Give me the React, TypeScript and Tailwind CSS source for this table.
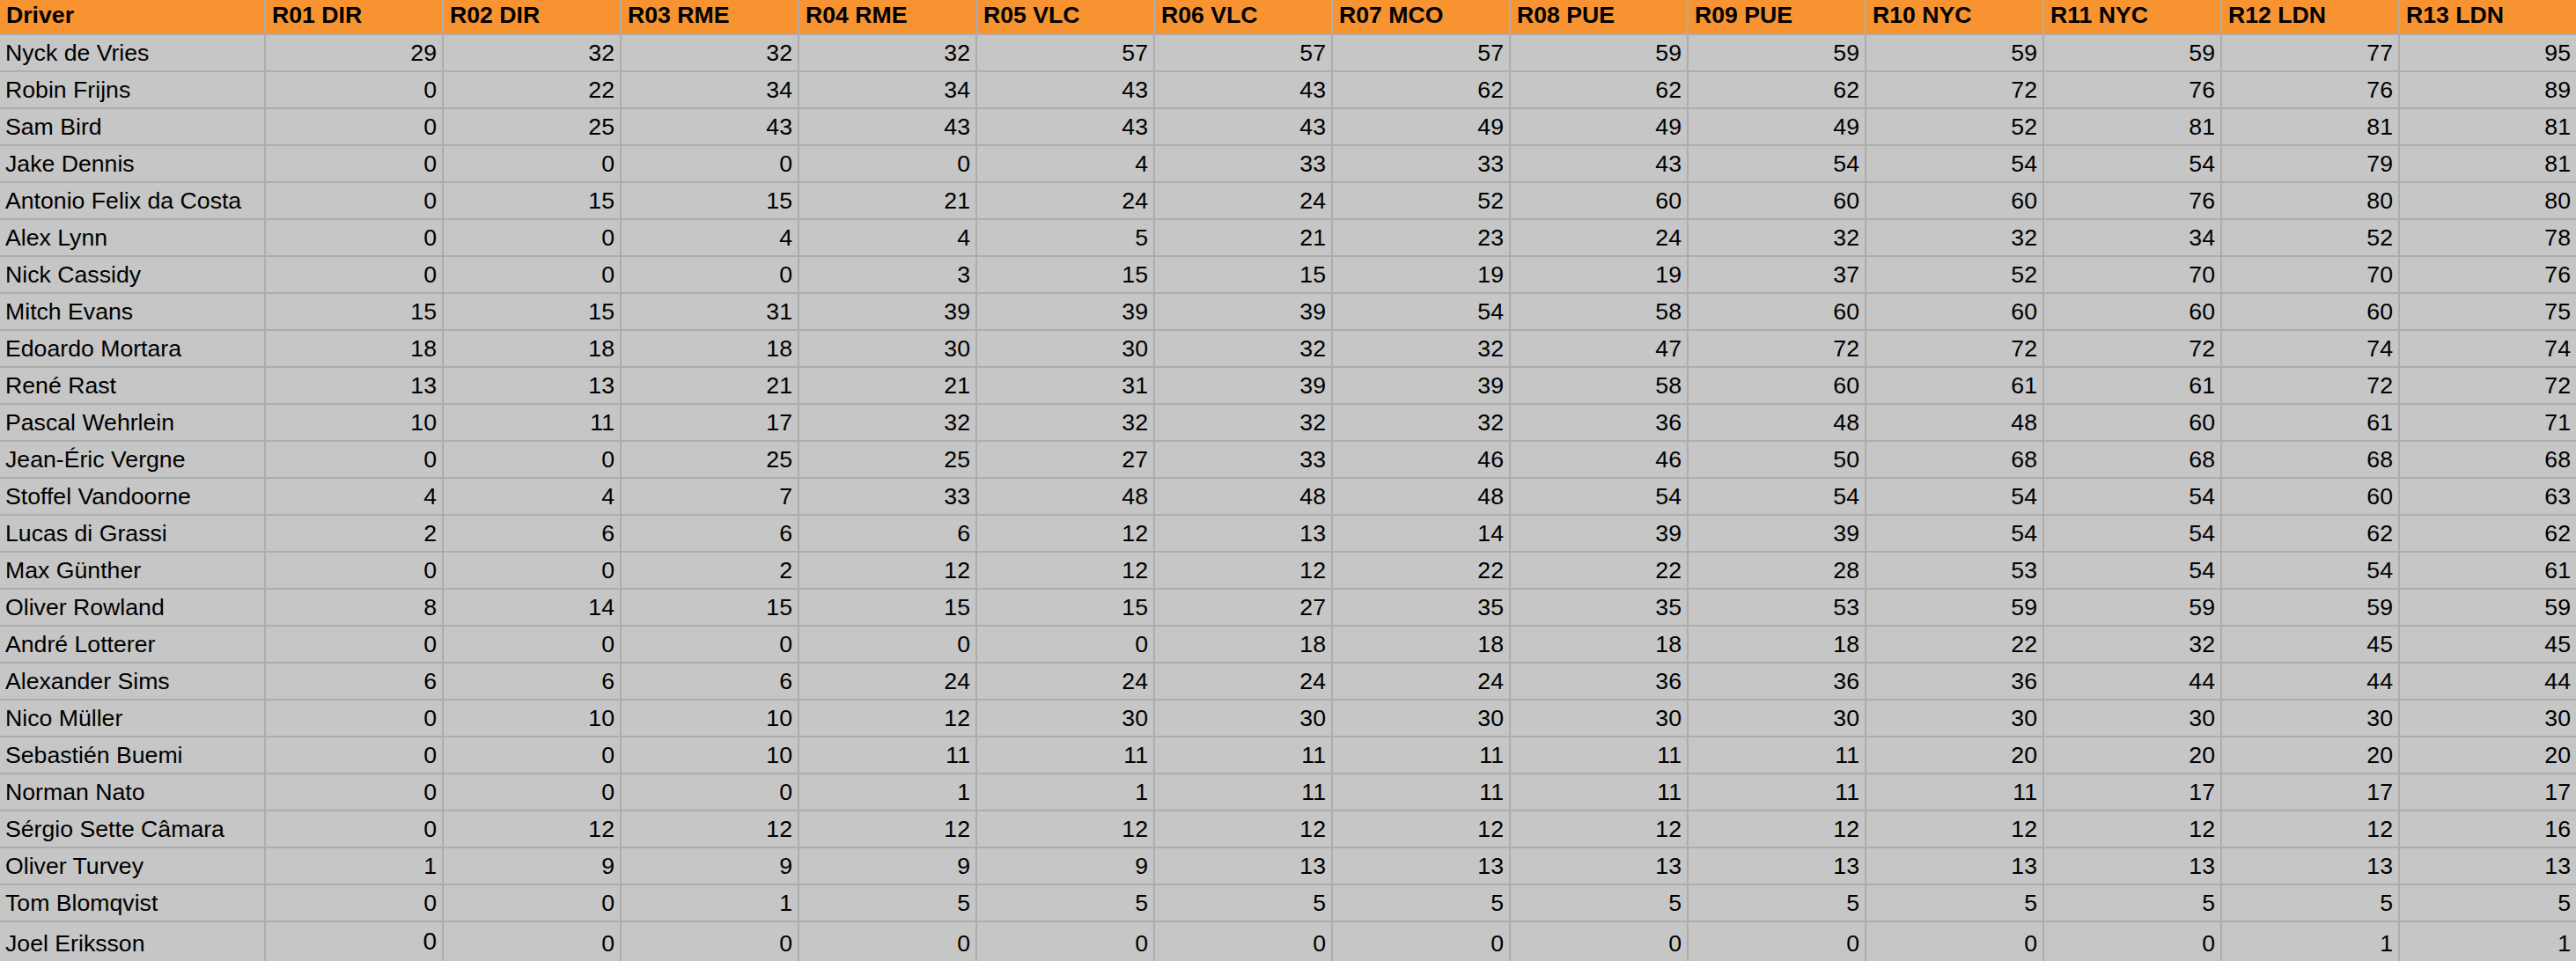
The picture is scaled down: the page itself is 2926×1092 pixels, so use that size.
import { Fragment } from "react";
import { clsx } from "clsx";

const ROUNDS = [
  "R01 DIR", "R02 DIR", "R03 RME", "R04 RME", "R05 VLC", "R06 VLC", "R07 MCO",
  "R08 PUE", "R09 PUE", "R10 NYC", "R11 NYC", "R12 LDN", "R13 LDN",
];

const DRIVERS: [string, number[]][] = [
  ["Nyck de Vries",          [29, 32, 32, 32, 57, 57, 57, 59, 59, 59, 59, 77, 95]],
  ["Robin Frijns",           [0, 22, 34, 34, 43, 43, 62, 62, 62, 72, 76, 76, 89]],
  ["Sam Bird",               [0, 25, 43, 43, 43, 43, 49, 49, 49, 52, 81, 81, 81]],
  ["Jake Dennis",            [0, 0, 0, 0, 4, 33, 33, 43, 54, 54, 54, 79, 81]],
  ["Antonio Felix da Costa", [0, 15, 15, 21, 24, 24, 52, 60, 60, 60, 76, 80, 80]],
  ["Alex Lynn",              [0, 0, 4, 4, 5, 21, 23, 24, 32, 32, 34, 52, 78]],
  ["Nick Cassidy",           [0, 0, 0, 3, 15, 15, 19, 19, 37, 52, 70, 70, 76]],
  ["Mitch Evans",            [15, 15, 31, 39, 39, 39, 54, 58, 60, 60, 60, 60, 75]],
  ["Edoardo Mortara",        [18, 18, 18, 30, 30, 32, 32, 47, 72, 72, 72, 74, 74]],
  ["René Rast",              [13, 13, 21, 21, 31, 39, 39, 58, 60, 61, 61, 72, 72]],
  ["Pascal Wehrlein",        [10, 11, 17, 32, 32, 32, 32, 36, 48, 48, 60, 61, 71]],
  ["Jean-Éric Vergne",       [0, 0, 25, 25, 27, 33, 46, 46, 50, 68, 68, 68, 68]],
  ["Stoffel Vandoorne",      [4, 4, 7, 33, 48, 48, 48, 54, 54, 54, 54, 60, 63]],
  ["Lucas di Grassi",        [2, 6, 6, 6, 12, 13, 14, 39, 39, 54, 54, 62, 62]],
  ["Max Günther",            [0, 0, 2, 12, 12, 12, 22, 22, 28, 53, 54, 54, 61]],
  ["Oliver Rowland",         [8, 14, 15, 15, 15, 27, 35, 35, 53, 59, 59, 59, 59]],
  ["André Lotterer",         [0, 0, 0, 0, 0, 18, 18, 18, 18, 22, 32, 45, 45]],
  ["Alexander Sims",         [6, 6, 6, 24, 24, 24, 24, 36, 36, 36, 44, 44, 44]],
  ["Nico Müller",            [0, 10, 10, 12, 30, 30, 30, 30, 30, 30, 30, 30, 30]],
  ["Sebastién Buemi",        [0, 0, 10, 11, 11, 11, 11, 11, 11, 20, 20, 20, 20]],
  ["Norman Nato",            [0, 0, 0, 1, 1, 11, 11, 11, 11, 11, 17, 17, 17]],
  ["Sérgio Sette Câmara",    [0, 12, 12, 12, 12, 12, 12, 12, 12, 12, 12, 12, 16]],
  ["Oliver Turvey",          [1, 9, 9, 9, 9, 13, 13, 13, 13, 13, 13, 13, 13]],
  ["Tom Blomqvist",          [0, 0, 1, 5, 5, 5, 5, 5, 5, 5, 5, 5, 5]],
  ["Joel Eriksson",          [0, 0, 0, 0, 0, 0, 0, 0, 0, 0, 0, 1, 1]],
];

export default function App() {
  return (
    <div className="h-[1092px] w-[2926px] overflow-hidden bg-[#adadad] font-['Liberation_Sans',Arial,sans-serif] text-[26.67px] leading-none text-black">
      <div className="grid grid-cols-[300px_repeat(13,200px)] grid-rows-[38px_repeat(24,40px)_44px] gap-[2px]">
        <div className="flex items-end bg-[#f79431] px-[7px] pb-[7px] font-bold">Driver</div>
        {ROUNDS.map((r) => (
          <div key={r} className="flex items-end bg-[#f79431] px-[7px] pb-[7px] font-bold">
            {r}
          </div>
        ))}
        {DRIVERS.map(([name, pts], rowIdx) => (
          <Fragment key={name}>
            <div className="flex items-end bg-[#c6c6c6] px-[6px] pb-[6px] whitespace-nowrap">
              {name}
            </div>
            {pts.map((p, i) => (
              <div
                key={i}
                className={clsx(
                  "flex items-end justify-end bg-[#c6c6c6] px-[6px]",
                  // odd one out in the sheet: first cell of the last row sits a bit higher
                  rowIdx === DRIVERS.length - 1 && i === 0 ? "pb-[8px] text-[28px]" : "pb-[6px]"
                )}
              >
                {p}
              </div>
            ))}
          </Fragment>
        ))}
      </div>
    </div>
  );
}
